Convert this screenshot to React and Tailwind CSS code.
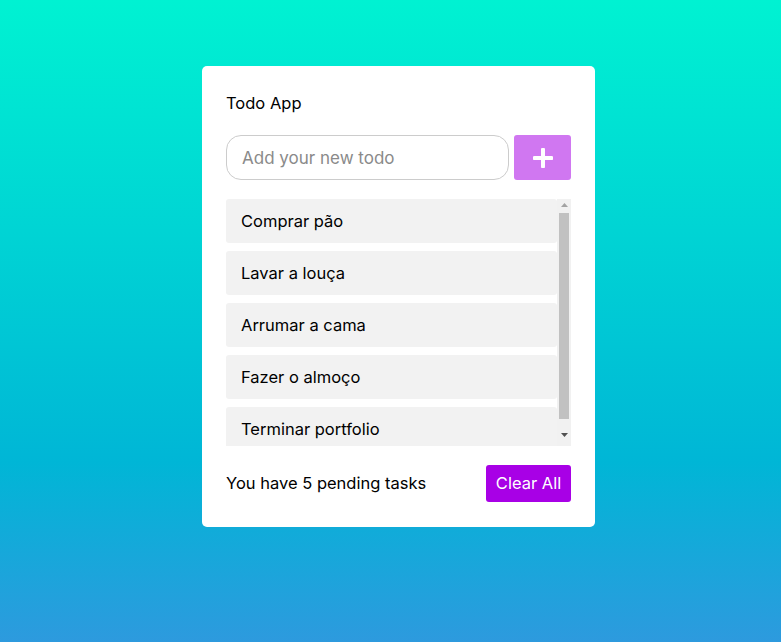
import React from "react";

const todos = ["Comprar pão", "Lavar a louça", "Arrumar a cama", "Fazer o almoço", "Terminar portfolio"];

export default function App() {
  return (
    <div
      className="min-h-[642px] w-full pt-[66px] pl-[202px] bg-[linear-gradient(to_bottom,#00f2d2_0%,#00b6d6_72%,#2d9ade_100%)]"
      style={{ fontFamily: "Inter, 'Noto Sans', sans-serif" }}
    >
      <div className="w-[393px] rounded-[5px] bg-white px-6 pt-6 pb-[25px]">
        <h1 className="text-[16.5px] leading-[26px] text-black">Todo App</h1>
        <div className="mt-[19px] flex gap-[5px]">
          <input
            className="h-[45px] w-[283px] rounded-[15px] border border-[#cccccc] px-[15px] text-[17px] text-black placeholder:text-[#8a8a8a] outline-none"
            placeholder="Add your new todo"
          />
          <button className="flex h-[45px] w-[57px] items-center justify-center rounded-[3px] bg-[#d077f1]">
            <svg width="20" height="20" viewBox="0 0 20 20">
              <path d="M10 1.5v17M1.5 10h17" stroke="white" strokeWidth="4" strokeLinecap="round" />
            </svg>
          </button>
        </div>
        <div className="mt-[19px] flex h-[247px]">
          <ul className="w-[331px] overflow-hidden">
            {todos.map((t) => (
              <li key={t} className="mb-2 flex h-[44px] items-center rounded-[3px] bg-[#f2f2f2] pl-[15px] text-[16.5px] text-black">
                {t}
              </li>
            ))}
          </ul>
          <div className="flex w-[14px] flex-col items-center bg-[#f1f1f1]">
            <div className="flex h-[12px] items-center justify-center">
              <svg width="7" height="4" viewBox="0 0 7 4">
                <path d="M0 4L3.5 0L7 4Z" fill="#a3a3a3" />
              </svg>
            </div>
            <div className="mt-[2px] h-[206px] w-[10px] bg-[#c1c1c1]" />
            <div className="flex flex-1 items-center justify-center pt-[4px]">
              <svg width="7" height="4" viewBox="0 0 7 4">
                <path d="M0 0L7 0L3.5 4Z" fill="#505050" />
              </svg>
            </div>
          </div>
        </div>
        <div className="mt-[19px] flex items-center justify-between">
          <span className="text-[16.5px] text-black">You have 5 pending tasks</span>
          <button className="h-[37px] w-[85px] rounded-[3px] bg-[#a800e6] text-[16.5px] text-white">Clear All</button>
        </div>
      </div>
    </div>
  );
}
